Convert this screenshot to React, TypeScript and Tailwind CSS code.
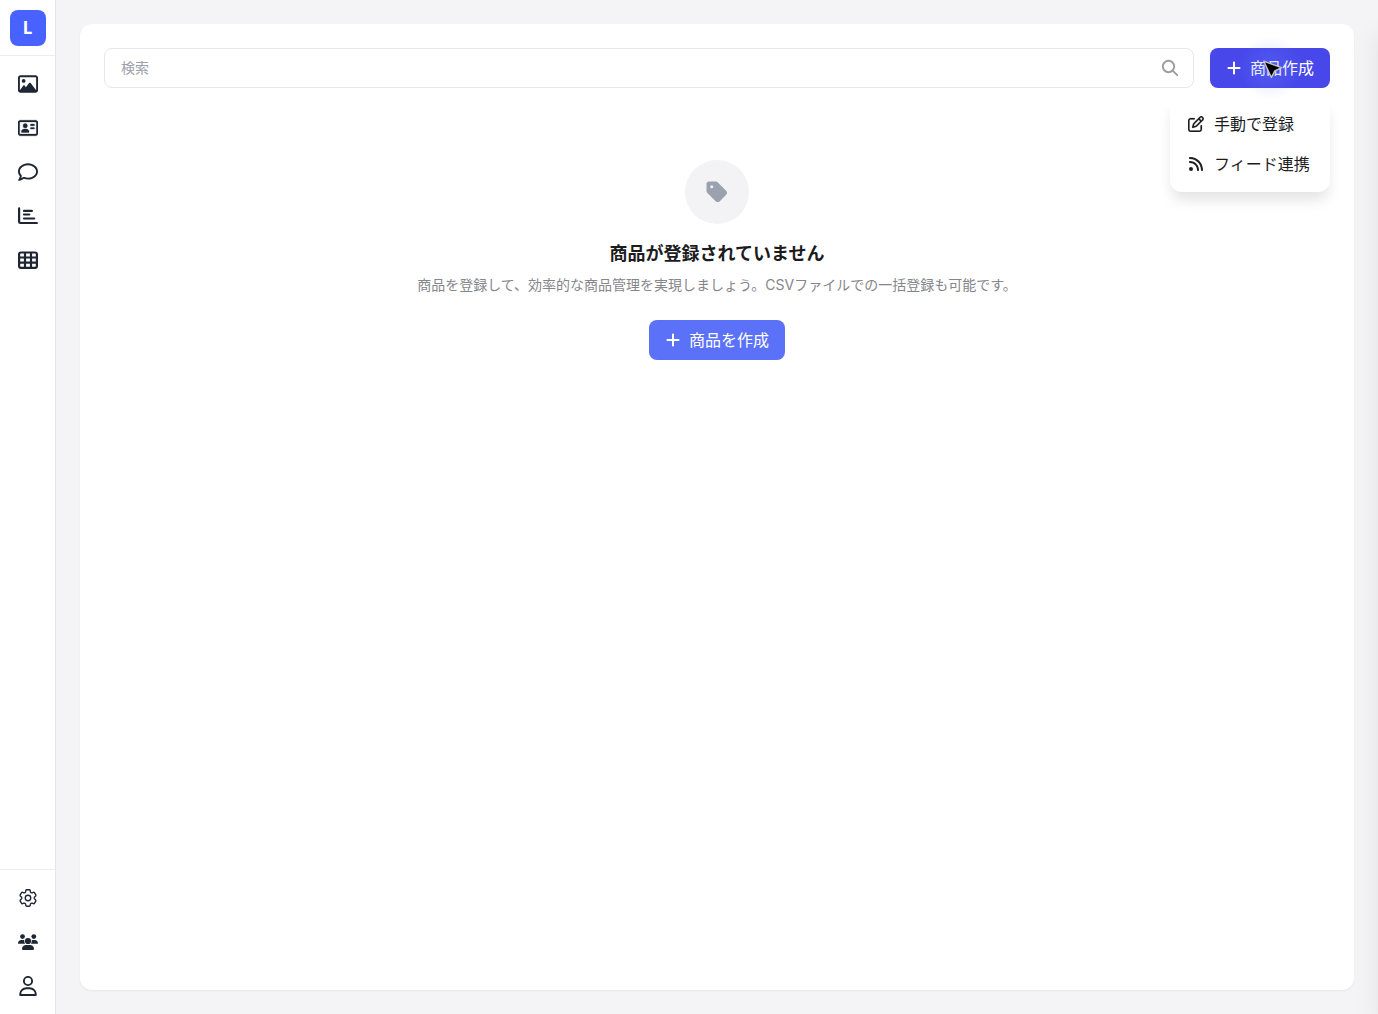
import type { ReactNode } from 'react';
import {
  FaPlus,
  FaRegAddressCard,
  FaRegComment,
  FaRegImage,
  FaRegPenToSquare,
  FaRss,
  FaTag,
} from 'react-icons/fa6';
import { HiOutlineCog6Tooth } from 'react-icons/hi2';

const NavItem = ({ children }: { children: ReactNode }) => (
  <a className="flex h-11 w-full items-center justify-center text-xl text-[#1e2533]">{children}</a>
);

const ChartIcon = () => (
  <svg width="20" height="20" viewBox="0 0 20 20" fill="none" stroke="currentColor" strokeWidth="2.2" strokeLinecap="round">
    <path d="M1.1 2.4v13.300c0 .8.6 1.300 1.300 1.300h16.500" />
    <path d="M6 4.900h7.900M6 8.500h5.300M6 12.500h10.200" />
  </svg>
);

const TableIcon = () => (
  <svg width="20" height="20" viewBox="0 0 20 20" fill="none" stroke="currentColor" strokeWidth="2.2">
    <rect x="1.1" y="2.500" width="17.800" height="15.400" rx="1.800" />
    <path d="M7 2v16M13 2v16M1 7.500h18M1 12.700h18" />
  </svg>
);

const TeamIcon = () => (
  <svg width="20" height="20" viewBox="0 0 20 20" fill="currentColor">
    <circle cx="4.5" cy="4.6" r="2.4" />
    <circle cx="15.8" cy="4.6" r="2.4" />
    <circle cx="10" cy="9" r="3.1" />
    <path d="M0 11.5C0 9.3 1.4 8.1 3.3 8.1h1.9c.4 0 .8.1 1.1.2-.2 1.3.1 2.5.9 3.5H.4a.4.4 0 0 1-.4-.3Z" />
    <path d="M20 11.5C20 9.3 18.6 8.1 16.7 8.1h-1.9c-.4 0-.8.1-1.1.2.2 1.3-.1 2.5-.9 3.5h6.8a.4.4 0 0 0 .4-.3Z" />
    <path d="M4 17.1c0-2.6 1.9-4.1 4.2-4.1h3.6c2.3 0 4.2 1.5 4.2 4.1 0 .5-.4.9-.9.9H4.9a.9.9 0 0 1-.9-.9Z" />
  </svg>
);

const PersonIcon = () => (
  <svg width="20" height="20" viewBox="0 0 20 20" fill="none" stroke="currentColor" strokeWidth="1.9">
    <circle cx="10" cy="5" r="4.1" />
    <path d="M2.2 19c-.2-3.900 2.600-6.700 6.300-6.700h3c3.700 0 6.500 2.800 6.300 6.700Z" strokeLinejoin="round" />
  </svg>
);

const SearchIcon = () => (
  <svg width="18" height="18" viewBox="0 0 18 18" fill="none" stroke="#9a9ca4" strokeWidth="1.9" strokeLinecap="round">
    <circle cx="7.5" cy="7.5" r="5.7" />
    <path d="m11.9 11.9 4.300 4.300" />
  </svg>
);

const Sidebar = () => (
  <aside className="flex w-14 shrink-0 flex-col border-r border-[#e4e5e9] bg-white">
    <div className="flex h-14 shrink-0 items-center justify-center border-b border-[#ededf0]">
      <div className="flex size-9 items-center justify-center rounded-lg bg-[#4862ff] font-['Noto_Sans',sans-serif] text-[17px] font-bold text-white">
        L
      </div>
    </div>
    <nav className="flex flex-1 flex-col pt-1.5">
      <NavItem><FaRegImage /></NavItem>
      <NavItem><FaRegAddressCard stroke="currentColor" strokeWidth="10" /></NavItem>
      <NavItem><FaRegComment /></NavItem>
      <NavItem><ChartIcon /></NavItem>
      <NavItem><TableIcon /></NavItem>
    </nav>
    <nav className="flex flex-col border-t border-[#ededf0] pt-1.5 pb-1.5">
      <NavItem><HiOutlineCog6Tooth className="size-[22px]" /></NavItem>
      <NavItem><TeamIcon /></NavItem>
      <NavItem><PersonIcon /></NavItem>
    </nav>
  </aside>
);

const CreateMenu = () => (
  <div className="absolute top-full right-0 mt-2 w-40 rounded-xl bg-white py-2 text-base text-[#1c1c1e] shadow-[0_10px_14px_-2px_rgba(0,0,0,0.11)]">
    <div className="flex h-10 items-center gap-2.5 px-[18px]">
      <FaRegPenToSquare className="size-4 shrink-0" stroke="currentColor" strokeWidth="6" />
      <span className="whitespace-nowrap">手動で登録</span>
    </div>
    <div className="flex h-10 items-center gap-2.5 px-[18px]">
      <FaRss className="size-4 shrink-0" />
      <span className="whitespace-nowrap">フィード連携</span>
    </div>
  </div>
);

// Pointer with a soft glow around it
const Cursor = () => (
  <div className="pointer-events-none absolute -top-3 left-7 size-16">
    <div className="absolute inset-0 rounded-full bg-[radial-gradient(circle,rgba(100,130,255,0.3)_0%,rgba(110,140,255,0.1)_40%,transparent_70%)]" />
    <svg className="absolute top-[23px] left-6" width="22" height="22" viewBox="0 0 22 22">
      <path
        d="M1.8 2.2 19.5 8.7 12.8 11.8 9.4 18.5Z"
        fill="#000"
        stroke="#c4c4c4"
        strokeWidth="1.4"
        strokeLinejoin="round"
      />
    </svg>
  </div>
);

const Toolbar = () => (
  <div className="flex gap-4">
    <label className="flex h-10 flex-1 items-center rounded-lg border border-[#e6e7ea] pr-3.5 pl-4 text-sm">
      <span className="flex-1 text-[#9ca0aa]">検索</span>
      <SearchIcon />
    </label>
    <div className="relative">
      <button className="flex h-10 w-[120px] items-center gap-2 rounded-lg bg-[#4848ea] px-4 text-base text-white">
        <FaPlus className="size-4 shrink-0" />
        <span className="whitespace-nowrap">商品作成</span>
      </button>
      <CreateMenu />
      <Cursor />
    </div>
  </div>
);

const EmptyState = () => (
  <div className="flex flex-col items-center pt-[72px]">
    <div className="flex size-16 items-center justify-center rounded-full bg-[#f3f3f6]">
      <FaTag className="size-6 text-[#9ca1b0]" />
    </div>
    <h2 className="mt-4 text-lg leading-7 font-bold text-[#1c1c1e]">商品が登録されていません</h2>
    <p className="mt-[7px] text-sm leading-5 text-[#85868b]">
      商品を登録して、効率的な商品管理を実現しましょう。CSVファイルでの一括登録も可能です。
    </p>
    <button className="mt-[25px] flex h-10 items-center gap-2 rounded-lg bg-[#5a71f8] px-4 text-base text-white">
      <FaPlus className="size-4" />
      <span>商品を作成</span>
    </button>
  </div>
);

export default function App() {
  return (
    <div className="relative flex h-screen overflow-hidden bg-[#f4f4f6] font-['Inter','Noto_Sans_CJK_JP',sans-serif]">
      <Sidebar />
      <main className="flex flex-1 p-6">
        <section className="flex-1 rounded-xl bg-white p-6 shadow-[0_1px_2px_rgba(0,0,0,0.06)]">
          <Toolbar />
          <EmptyState />
        </section>
      </main>
      {/* Closed drawer, only its shadow reaches the page */}
      <div className="absolute top-6 bottom-0 left-full w-80 shadow-[0_10px_24px_rgba(0,0,0,0.08)]" />
    </div>
  );
}
